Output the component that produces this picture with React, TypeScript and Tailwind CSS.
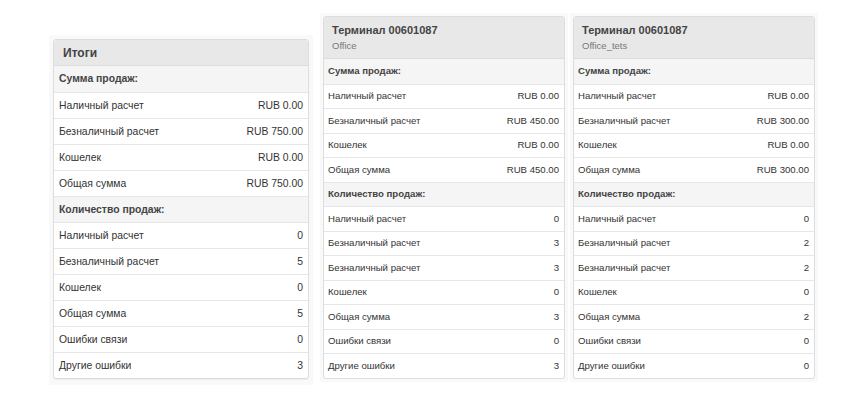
const FONT = { fontFamily: '"Liberation Sans", Arial, sans-serif' };

type Row = { label: string; value?: string; section?: boolean };

const TOTALS: Row[] = [
  { label: 'Сумма продаж:', section: true },
  { label: 'Наличный расчет', value: 'RUB 0.00' },
  { label: 'Безналичный расчет', value: 'RUB 750.00' },
  { label: 'Кошелек', value: 'RUB 0.00' },
  { label: 'Общая сумма', value: 'RUB 750.00' },
  { label: 'Количество продаж:', section: true },
  { label: 'Наличный расчет', value: '0' },
  { label: 'Безналичный расчет', value: '5' },
  { label: 'Кошелек', value: '0' },
  { label: 'Общая сумма', value: '5' },
  { label: 'Ошибки связи', value: '0' },
  { label: 'Другие ошибки', value: '3' },
];

function terminalRows(sum: string, count: string, other: string): Row[] {
  return [
    { label: 'Сумма продаж:', section: true },
    { label: 'Наличный расчет', value: 'RUB 0.00' },
    { label: 'Безналичный расчет', value: sum },
    { label: 'Кошелек', value: 'RUB 0.00' },
    { label: 'Общая сумма', value: sum },
    { label: 'Количество продаж:', section: true },
    { label: 'Наличный расчет', value: '0' },
    { label: 'Безналичный расчет', value: count },
    { label: 'Безналичный расчет', value: count },
    { label: 'Кошелек', value: '0' },
    { label: 'Общая сумма', value: count },
    { label: 'Ошибки связи', value: '0' },
    { label: 'Другие ошибки', value: other },
  ];
}

const TERMINALS = [
  { name: 'Терминал 00601087', place: 'Office', rows: terminalRows('RUB 450.00', '3', '3') },
  { name: 'Терминал 00601087', place: 'Office_tets', rows: terminalRows('RUB 300.00', '2', '0') },
];

function TotalsPanel() {
  return (
    <div className="bg-[#f9f9f9] p-[4px] pb-[6px] mt-[22px]">
      <div className="w-[256px] border border-[#dddddd] rounded-[3px] bg-white overflow-hidden shadow-[0_1px_1px_rgba(0,0,0,0.05)]">
        <div className="h-[26px] flex items-center px-[9px] bg-[#e8e8e8] border-b border-[#dddddd] text-[12px] font-bold text-[#444]">
          Итоги
        </div>
        {TOTALS.map((r, i) => (
          <div
            key={i}
            className={
              'h-[26px] flex items-center justify-between px-[5px] text-[10.4px] ' +
              (i > 0 ? 'border-t border-[#e6e6e6] ' : '') +
              (r.section ? 'bg-[#f5f5f5] font-bold text-[#444]' : 'text-[#333]')
            }
          >
            <span>{r.label}</span>
            {r.value && <span>{r.value}</span>}
          </div>
        ))}
      </div>
    </div>
  );
}

function TerminalPanel({ name, place, rows }: { name: string; place: string; rows: Row[] }) {
  return (
    <div className="bg-[#f9f9f9] p-[3px]">
      <div className="w-[242px] border border-[#dddddd] rounded-[3px] bg-white overflow-hidden">
        <div className="h-[42px] flex flex-col justify-center px-[8px] bg-[#e8e8e8] border-b border-[#dddddd]">
          <div className="text-[11px] font-bold text-[#444] leading-[14px]">{name}</div>
          <div className="text-[9.5px] text-[#777] leading-[12px] mt-[3px]">{place}</div>
        </div>
        {rows.map((r, i) => (
          <div
            key={i}
            className={
              'h-[24.5px] flex items-center justify-between pl-[4px] pr-[5px] text-[9.6px] ' +
              (i > 0 ? 'border-t border-[#e6e6e6] ' : '') +
              (r.section ? 'bg-[#f5f5f5] font-bold text-[#444]' : 'text-[#333]')
            }
          >
            <span>{r.label}</span>
            {r.value && <span>{r.value}</span>}
          </div>
        ))}
      </div>
    </div>
  );
}

export default function App() {
  return (
    <div className="w-[857px] h-[395px] bg-white flex items-start pt-[13px] pl-[49px]" style={FONT}>
      <TotalsPanel />
      <div className="ml-[7px]">
        <TerminalPanel {...TERMINALS[0]} />
      </div>
      <div className="ml-[2px]">
        <TerminalPanel {...TERMINALS[1]} />
      </div>
    </div>
  );
}
